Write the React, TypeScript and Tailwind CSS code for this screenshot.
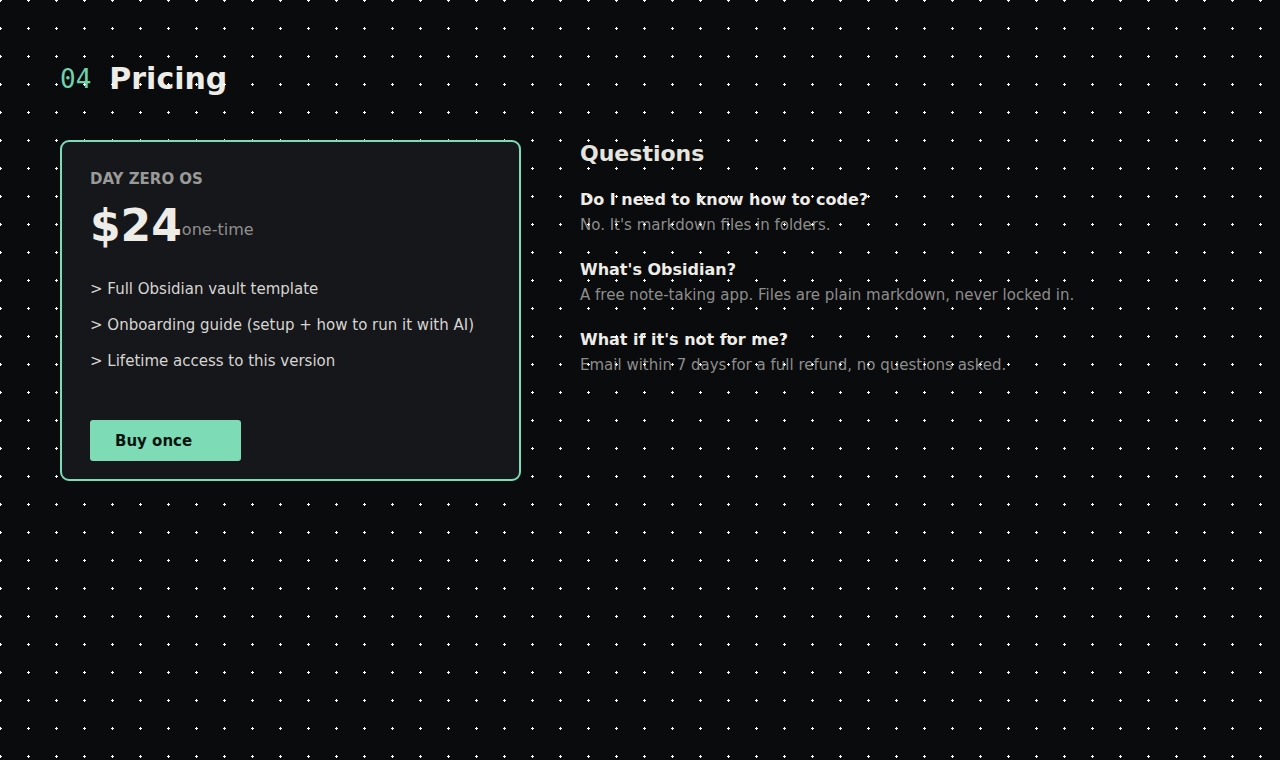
import React from "react";

const features = [
    "Full Obsidian vault template",
    "Onboarding guide (setup + how to run it with AI)",
    "Lifetime access to this version",
];

const faqs = [
    { q: "Do I need to know how to code?", a: "No. It's markdown files in folders." },
    { q: "What's Obsidian?", a: "A free note-taking app. Files are plain markdown, never locked in." },
    { q: "What if it's not for me?", a: "Email within 7 days for a full refund, no questions asked." },
];

const DotGrid: React.FC = () => (
    <svg className="pointer-events-none absolute inset-0 h-full w-full" aria-hidden="true">
        <defs>
            <pattern id="dots" x="14" y="14" width="28" height="28" patternUnits="userSpaceOnUse">
                <rect x="13" y="14" width="3" height="1" fill="#ffffff" />
                <rect x="14" y="13" width="1" height="3" fill="#ffffff" />
            </pattern>
        </defs>
        <rect width="100%" height="100%" fill="url(#dots)" />
    </svg>
);

const PricingCard: React.FC = () => (
    <div className="relative z-10 w-[461px] rounded-[9px] border-2 border-[#7ddcb5] bg-[#16171b] px-[28px] pt-[26px] pb-[18px]">
        <div className="text-[15px] leading-[22px] font-bold text-[#9a9a98]">DAY ZERO OS</div>
        <div className="mt-[14px] flex items-center">
            <span className="text-[44px] leading-[44px] font-bold text-[#eeece7]">$24</span>
            <span className="pt-[7px] text-[16px] leading-[24px] text-[#8f8f8d]">one-time</span>
        </div>
        <ul className="mt-[30px] flex flex-col gap-[14px]">
            {features.map(f => (
                <li key={f} className="text-[15px] leading-[22px] text-[#d6d5d1]">&gt; {f}</li>
            ))}
        </ul>
        <button
            type="button"
            className="mt-[48px] h-[41px] w-[151px] rounded-[3px] bg-[#7ddcb5] pt-[2px] pl-[25px] text-left text-[15px] font-bold text-[#0c1410]"
        >
            Buy once
        </button>
    </div>
);

export default function App() {
    return (
        <div className="relative min-h-screen overflow-hidden bg-[#0a0b0d] font-['DejaVu_Sans',sans-serif]">
            <div className="px-[60px] pt-[61px]">
                <h2 className="flex items-center gap-[18px]">
                    <span className="font-['DejaVu_Sans_Mono',monospace] text-[26px] leading-[36px] text-[#6fd3ad]">04</span>
                    <span className="text-[30px] leading-[36px] font-bold text-[#eeece7]">Pricing</span>
                </h2>

                <div className="mt-[43px] flex items-start gap-[59px]">
                    <PricingCard />

                    <div className="flex-1">
                        <h3 className="text-[22px] leading-[28px] font-bold text-[#e6e4df]">Questions</h3>
                        <div className="mt-[20px] flex flex-col gap-[22px]">
                            {faqs.map(item => (
                                <div key={item.q}>
                                    <div className="text-[16px] leading-[24px] font-bold text-[#eeece7]">{item.q}</div>
                                    <div className="mt-[2px] text-[15px] leading-[22px] text-[#8d8d8b]">{item.a}</div>
                                </div>
                            ))}
                        </div>
                    </div>
                </div>
            </div>

            {/* dot grid sits on top of the page, the card covers it */}
            <DotGrid />
        </div>
    );
}
